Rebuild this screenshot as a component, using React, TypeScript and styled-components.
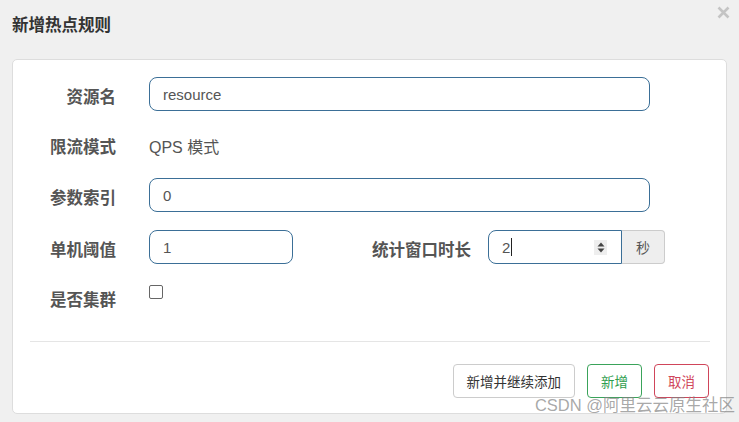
import styled, { createGlobalStyle } from 'styled-components';

const GlobalStyle = createGlobalStyle`
  html, body {
    margin: 0;
    padding: 0;
    background: #f0f0f0;
    font-family: "Liberation Sans", Arial, "Noto Sans CJK SC", sans-serif;
    color: #555;
  }
`;

const PAGE = styled.div`
  position: relative;
  width: 739px;
  height: 422px;
  overflow: hidden;
  background: #f0f0f0;
`;

const HEADER = styled.div`
  display: flex;
  align-items: center;
  justify-content: space-between;
  height: 48px;
  padding: 0 9px 0 12px;
  box-sizing: border-box;
`;

const TITLE = styled.h4`
  margin: 0;
  font-size: 16.5px;
  font-weight: bold;
  color: #333;
`;

const CLOSE = styled.span`
  align-self: flex-start;
  margin-top: 6px;
  display: flex;
`;

const PANEL = styled.div`
  margin: 11px 12px 0 12px;
  height: 355px;
  box-sizing: border-box;
  background: #fff;
  border: 1px solid #ddd;
  border-radius: 5px;
  display: flex;
  flex-direction: column;
`;

const ROW = styled.div<{ $mt: number; $h?: number }>`
  display: flex;
  align-items: center;
  margin-top: ${(p) => p.$mt}px;
  height: ${(p) => p.$h ?? 34}px;
`;

const LABEL = styled.label<{ $w?: number; $top?: boolean }>`
  width: ${(p) => p.$w ?? 103}px;
  flex: none;
  text-align: right;
  font-size: 16.5px;
  font-weight: bold;
  color: #555;
  margin-right: ${(p) => (p.$w ? 17 : 33)}px;
  align-self: ${(p) => (p.$top ? 'flex-start' : 'center')};
  padding-top: ${(p) => (p.$top ? 4 : 3)}px;
`;

const INPUT = styled.div<{ $w: number; $group?: boolean }>`
  width: ${(p) => p.$w}px;
  height: 34px;
  box-sizing: border-box;
  border: 1px solid #3b6f97;
  border-radius: ${(p) => (p.$group ? '8px 0 0 8px' : '8px')};
  padding: 0 13px;
  display: flex;
  align-items: center;
  font-size: 15px;
  color: #555;
`;

const STATIC = styled.span`
  font-size: 16px;
  color: #555;
  padding-top: 3px;
`;

const CARET = styled.span`
  display: inline-block;
  width: 1px;
  height: 18px;
  background: #222;
  margin-left: 1px;
`;

const SPINNER = styled.span`
  margin-left: auto;
  margin-right: 1px;
  width: 13px;
  height: 15px;
  background: #eee;
  display: flex;
  align-items: center;
  justify-content: center;
`;

const ADDON = styled.div`
  width: 43px;
  height: 34px;
  box-sizing: border-box;
  border: 1px solid #ccc;
  border-left: none;
  border-radius: 0 4px 4px 0;
  background: #eee;
  display: flex;
  align-items: center;
  justify-content: center;
  font-size: 14px;
  color: #555;
`;

const CHECK = styled.span`
  width: 12px;
  height: 12px;
  border: 1px solid #666;
  border-radius: 2px;
  align-self: flex-start;
  margin-top: 2px;
`;

const DIVIDER = styled.div`
  margin: 24px 16px 0 17px;
  border-top: 1px solid #e5e5e5;
`;

const FOOTER = styled.div`
  display: flex;
  justify-content: flex-end;
  gap: 12px;
  margin-top: 22px;
  padding-right: 17px;
`;

const BUTTON = styled.button<{ $tone?: 'green' | 'red' }>`
  height: 34px;
  padding: 0 13px;
  background: #fff;
  border: 1px solid
    ${(p) => (p.$tone === 'green' ? '#3aa35a' : p.$tone === 'red' ? '#d0455a' : '#ccc')};
  color: ${(p) => (p.$tone === 'green' ? '#2f9e4e' : p.$tone === 'red' ? '#d0455a' : '#333')};
  border-radius: 4px;
  font-family: inherit;
  font-size: 13.5px;
`;

const WATERMARK = styled.div`
  position: absolute;
  right: 4px;
  bottom: 6px;
  font-size: 16.5px;
  color: rgba(130, 130, 130, 0.7);
`;

export default function App() {
  return (
    <>
      <GlobalStyle />
      <PAGE>
        <HEADER>
          <TITLE>新增热点规则</TITLE>
          <CLOSE>
            <svg width="13" height="13" viewBox="0 0 13 13">
              <path d="M1.5 1.5 L11.5 11.5 M11.5 1.5 L1.5 11.5" stroke="#c4c4c4" strokeWidth="2.6" />
            </svg>
          </CLOSE>
        </HEADER>
        <PANEL>
          <ROW $mt={17}>
            <LABEL>资源名</LABEL>
            <INPUT $w={501}>resource</INPUT>
          </ROW>
          <ROW $mt={16}>
            <LABEL>限流模式</LABEL>
            <STATIC>QPS 模式</STATIC>
          </ROW>
          <ROW $mt={17}>
            <LABEL>参数索引</LABEL>
            <INPUT $w={501}>0</INPUT>
          </ROW>
          <ROW $mt={18}>
            <LABEL>单机阈值</LABEL>
            <INPUT $w={144}>1</INPUT>
            <LABEL $w={178}>统计窗口时长</LABEL>
            <INPUT $w={134} $group>
              2<CARET />
              <SPINNER>
                <svg width="8" height="11" viewBox="0 0 8 11">
                  <path d="M4 0.5 L7.5 4.5 L0.5 4.5 Z M4 10.5 L7.5 6.5 L0.5 6.5 Z" fill="#444" />
                </svg>
              </SPINNER>
            </INPUT>
            <ADDON>秒</ADDON>
          </ROW>
          <ROW $mt={19}>
            <LABEL $top>是否集群</LABEL>
            <CHECK />
          </ROW>
          <DIVIDER />
          <FOOTER>
            <BUTTON>新增并继续添加</BUTTON>
            <BUTTON $tone="green">新增</BUTTON>
            <BUTTON $tone="red">取消</BUTTON>
          </FOOTER>
        </PANEL>
        <WATERMARK>CSDN @阿里云云原生社区</WATERMARK>
      </PAGE>
    </>
  );
}
